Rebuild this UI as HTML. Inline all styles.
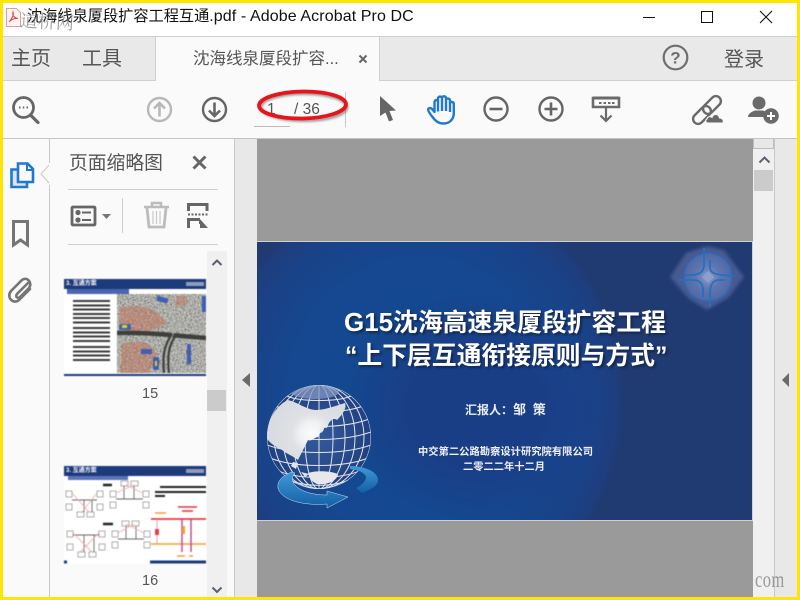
<!DOCTYPE html>
<html><head><meta charset="utf-8">
<style>
html,body{margin:0;padding:0;width:800px;height:600px;overflow:hidden;background:#fafafa}
body{position:relative;font-family:"Liberation Sans","Noto Sans CJK SC",sans-serif;color:#505050}
.a{position:absolute}
.t{position:absolute;white-space:nowrap}
svg{position:absolute;overflow:visible}
.s{font-family:"Liberation Sans","Noto Sans CJK SC",sans-serif;font-weight:700;color:#fff;white-space:nowrap;position:absolute}
</style></head><body>
<!-- title bar -->
<div class="a" style="left:0;top:0;width:800px;height:36px;background:#fff"></div>
<div class="a" style="left:0;top:36px;width:800px;height:1px;background:#cfcfcf"></div>
<!-- tab bar -->
<div class="a" style="left:0;top:37px;width:800px;height:43px;background:#e9e9e9"></div>
<div class="a" style="left:0;top:80px;width:800px;height:1px;background:#cfcfcf"></div>
<div class="a" style="left:155px;top:37px;width:225px;height:44px;background:#fafafa;border-left:1px solid #cfcfcf;border-right:1px solid #cfcfcf;box-sizing:border-box"></div>
<!-- toolbar line -->
<div class="a" style="left:0;top:138px;width:800px;height:1px;background:#c4c4c4"></div>

<svg style="left:6px;top:8px" width="15" height="19" viewBox="0 0 15 19"><path d="M.5 .5H10.500L14.500 4.500V18.500H.5Z" fill="#fff5f5" stroke="#e89a9a"/><path d="M3 14C6 11 8 7 7 4C6 7 8 10 12 10.500C8 10 5 12 3 14Z" fill="none" stroke="#e04040"/></svg>
<div class="t" style="left:27px;top:6px;font-size:15.200px;line-height:22px;color:#111">沈海线泉厦段扩容工程互通<span style="font-size:16px;letter-spacing:.1px">.pdf - Adobe Acrobat Pro DC</span></div>
<div class="t" style="left:20px;top:11px;font-size:18px;line-height:20px;color:#777;opacity:.7;font-family:'Noto Serif CJK SC',serif;transform:rotate(3deg)">道桥网</div>

<!-- window controls -->
<div class="a" style="left:643px;top:17px;width:12px;height:1px;background:#111"></div>
<div class="a" style="left:701px;top:11px;width:12px;height:12px;border:1px solid #111;box-sizing:border-box"></div>
<svg style="left:759px;top:10px" width="14" height="14"><path d="M1 1L13 13M13 1L1 13" stroke="#111" stroke-width="1.100"/></svg>

<!-- tabs -->
<div class="t" style="left:11px;top:45px;font-size:20px;line-height:28px;color:#555">主页</div>
<div class="t" style="left:82px;top:45px;font-size:20px;line-height:28px;color:#555">工具</div>
<div class="t" style="left:193px;top:47px;font-size:16.500px;line-height:24px;color:#555">沈海线泉厦段扩容...</div>
<svg style="left:358px;top:54px" width="10" height="10"><path d="M1.500 1.500L8.500 8.500M8.500 1.500L1.500 8.500" stroke="#666" stroke-width="2"/></svg>
<svg style="left:661px;top:44px" width="28" height="28"><circle cx="14.500" cy="13.500" r="11.800" fill="none" stroke="#6e6e6e" stroke-width="2.200"/><text x="14.500" y="19.500" text-anchor="middle" font-size="17" font-weight="700" font-family="Liberation Sans" fill="#6e6e6e">?</text></svg>
<div class="t" style="left:724px;top:46px;font-size:20px;line-height:28px;color:#555">登录</div>

<!-- toolbar icons -->
<svg style="left:10px;top:95px" width="32" height="32"><circle cx="13.500" cy="12.500" r="10" fill="none" stroke="#666" stroke-width="2.800"/><path d="M20.500 20L28 27.500" stroke="#666" stroke-width="3.200" stroke-linecap="round"/><path d="M9 12.500h1.500M12.800 12.500h1.500M16.500 12.500h1.500" stroke="#666" stroke-width="2"/></svg>
<svg style="left:145px;top:95px" width="28" height="28"><circle cx="14.500" cy="14.500" r="11.500" fill="none" stroke="#b8b8b8" stroke-width="2.400"/><path d="M14.500 21.500V8M9 13.500L14.500 8L20 13.500" fill="none" stroke="#b8b8b8" stroke-width="2.600"/></svg>
<svg style="left:200px;top:95px" width="28" height="28"><circle cx="14.500" cy="14.500" r="11.500" fill="none" stroke="#666" stroke-width="2.400"/><path d="M14.500 7.500V21M9 15.500L14.500 21L20 15.500" fill="none" stroke="#666" stroke-width="2.600"/></svg>

<!-- page box -->
<div class="a" style="left:254px;top:126px;width:36px;height:1px;background:#bdbdbd"></div>
<div class="a" style="left:345px;top:92px;width:1px;height:35px;background:#c8c8c8"></div>
<div class="t" style="left:267px;top:100px;font-size:15.500px;line-height:20px;color:#555">1</div>
<div class="t" style="left:294px;top:100px;font-size:15.500px;line-height:20px;color:#555">/ 36</div>
<svg style="left:255px;top:88px" width="96" height="40"><defs><filter id="es" x="-20%" y="-40%" width="140%" height="180%"><feGaussianBlur stdDeviation="1"/></filter></defs><ellipse cx="49" cy="19" rx="43" ry="13.500" fill="none" stroke="#555" stroke-width="3" opacity=".6" filter="url(#es)"/><ellipse cx="47.500" cy="17" rx="43.500" ry="13.500" fill="none" stroke="#e8141c" stroke-width="3.800" transform="rotate(-1 47 17)"/></svg>

<svg style="left:378px;top:95px" width="22" height="28"><path d="M2 1L18 15.500L11.500 16L15 25L11 26.500L7.500 17.500L2 21Z" fill="#666"/></svg>
<svg style="left:427px;top:95px" width="30" height="30" viewBox="0 0 30 30"><path d="M5.500 22C3.500 19.500 1.500 17 1.200 15C1 13 3.500 12.500 5 14L7.500 17V7C7.500 4.500 11 4.500 11 7V3.500C11 1 15 1 15 3.500V3C15 .8 19 .8 19 3V5C19 3 23 3 23 5.500V8C23 6.500 26.800 6.500 26.800 9V18C26.800 24.500 22.500 28.500 16.500 28.500C11.500 28.500 8.500 26 5.500 22ZM11 6V16.500M15 3.500V16M19 3V16M23 7V17" fill="none" stroke="#1f78d1" stroke-width="2.400" stroke-linejoin="round"/></svg>
<svg style="left:482px;top:95px" width="28" height="28"><circle cx="14" cy="14" r="11.500" fill="none" stroke="#666" stroke-width="2.400"/><path d="M7.500 14H20.500" stroke="#666" stroke-width="2.600"/></svg>
<svg style="left:537px;top:95px" width="28" height="28"><circle cx="14" cy="14" r="11.500" fill="none" stroke="#666" stroke-width="2.400"/><path d="M7.500 14H20.500M14 7.500V20.500" stroke="#666" stroke-width="2.600"/></svg>
<svg style="left:591px;top:96px" width="30" height="28"><path d="M2 2H28V11H2Z" fill="none" stroke="#6a6a6a" stroke-width="2.600"/><path d="M2 2H28" stroke="#6a6a6a" stroke-width="3"/><path d="M8 7h2.500M12.500 7h2.500M17 7h2.500M21 7h2.500" stroke="#6a6a6a" stroke-width="2"/><path d="M15 11V25M9.500 19.500L15 25L20.500 19.500" fill="none" stroke="#6a6a6a" stroke-width="2.200"/></svg>
<svg style="left:692px;top:94px" width="34" height="32">
 <rect x="-10.500" y="-5" width="21" height="10" rx="5" transform="translate(10,21) rotate(-45)" fill="none" stroke="#6a6a6a" stroke-width="2.400"/>
 <rect x="-10.500" y="-5" width="21" height="10" rx="5" transform="translate(20,11) rotate(-45)" fill="none" stroke="#6a6a6a" stroke-width="2.400"/>
 <path d="M16 29C13.500 29 13 26 15 25C15.500 22.500 18.500 22 20 23.500C21.500 19.500 26.500 19.500 27.500 24C30 24 32 26 31 29Z" fill="#6a6a6a" stroke="#fafafa" stroke-width="1"/>
</svg>
<svg style="left:747px;top:94px" width="34" height="32"><circle cx="12" cy="9" r="6.500" fill="#6a6a6a"/><path d="M1 23C1 19.500 5 17.500 8 16.500H16C19 17.500 22 19 22 20L19 23Z" fill="#6a6a6a"/><circle cx="24" cy="22" r="7.800" fill="#6a6a6a"/><path d="M20 22H28M24 18V26" stroke="#fff" stroke-width="2"/></svg>

<!-- left rail -->
<div class="a" style="left:49px;top:139px;width:1px;height:461px;background:#c8c8c8"></div>
<svg style="left:40px;top:162px" width="14" height="26"><path d="M10 2L1 12L10 22" fill="#fafafa" stroke="#c8c8c8"/><path d="M10 1V23" stroke="#fafafa" stroke-width="2"/></svg>
<svg style="left:9px;top:160px" width="28" height="32"><path d="M2.500 9.500H18V27H2.500Z" fill="#dfe4ea" stroke="#1f78d1" stroke-width="2.600"/><path d="M9 3.500H18.500L24 9V22H9Z" fill="#fafafa" stroke="#1f78d1" stroke-width="2.600"/><path d="M18 4V10H24" fill="none" stroke="#1f78d1" stroke-width="2"/></svg>
<svg style="left:11px;top:219px" width="20" height="30"><path d="M2.500 2.500H16.500V26L9.500 21L2.500 26Z" fill="none" stroke="#757575" stroke-width="3"/></svg>
<svg style="left:7px;top:276px" width="28" height="28"><path d="M21 7L10 18C8 21 11 23 13 21L22 12C26 7 20 0 15 4L4 15C-1 21 6 29 12 24L23 13" fill="none" stroke="#757575" stroke-width="2.600" stroke-linecap="round"/></svg>

<!-- thumbnail panel -->
<div class="t" style="left:69px;top:149px;font-size:18.800px;line-height:28px;color:#555">页面缩略图</div>
<svg style="left:192px;top:155px" width="16" height="16"><path d="M1.500 1.500L13.500 13.500M13.500 1.500L1.500 13.500" stroke="#666" stroke-width="3"/></svg>
<div class="a" style="left:68px;top:189px;width:150px;height:1px;background:#cfcfcf"></div>
<div class="a" style="left:68px;top:244px;width:150px;height:1px;background:#cfcfcf"></div>
<div class="a" style="left:122px;top:198px;width:1px;height:35px;background:#cfcfcf"></div>
<svg style="left:70px;top:205px" width="44" height="24"><rect x="2" y="2" width="23" height="18" rx="1" fill="none" stroke="#666" stroke-width="2.800"/><circle cx="8" cy="7.500" r="2.600" fill="#666"/><circle cx="8" cy="15" r="2.600" fill="#666"/><path d="M12 7.500H21M12 15H21" stroke="#666" stroke-width="2"/><path d="M32 9H41L36.500 14Z" fill="#777"/></svg>
<svg style="left:143px;top:201px" width="28" height="30"><path d="M1 6H26M9 5V2H18V5" fill="none" stroke="#bcbcbc" stroke-width="2.600"/><path d="M4 7L6 26H21L23 7" fill="none" stroke="#bcbcbc" stroke-width="2.800"/><path d="M10 10V23M13.500 10V23M17 10V23" stroke="#c8c8c8" stroke-width="1.200"/></svg>
<svg style="left:187px;top:202px" width="24" height="28"><path d="M1.500 9V2.500H20V9" fill="none" stroke="#666" stroke-width="3"/><path d="M1 12.500H21" stroke="#666" stroke-width="2" stroke-dasharray="2 1.500"/><path d="M1.500 26V17.500H13" fill="none" stroke="#666" stroke-width="3"/><path d="M12 16L21 26H13V22H12Z" fill="#666"/></svg>

<!-- thumb scrollbar -->
<div class="a" style="left:207px;top:251px;width:20px;height:349px;background:#f0f0f0"></div>
<svg style="left:211px;top:258px" width="12" height="10"><path d="M1.500 7L6 2.500L10.500 7" fill="none" stroke="#5a6070" stroke-width="2"/></svg>
<div class="a" style="left:207px;top:390px;width:19px;height:21px;background:#cbcbcb"></div>
<svg style="left:211px;top:585px" width="12" height="10"><path d="M1.500 2.500L6 7L10.500 2.500" fill="none" stroke="#5a6070" stroke-width="2"/></svg>

<!-- thumb 15 -->
<div class="a" style="left:64px;top:279px;width:142px;height:97px;background:#fff;overflow:hidden;filter:blur(.45px)">
 <div class="a" style="left:0;top:0;width:142px;height:10px;background:#1d3a7a"></div>
 <div class="t" style="left:2px;top:0;font-size:6px;line-height:10px;color:#fff;font-weight:700">3. 互通方案</div>
 <div class="a" style="left:122px;top:3px;width:18px;height:4px;background:#8f9cbd"></div>
 <div class="a" style="left:3px;top:10px;width:62px;height:5px;background:#4a66b0"></div>
 <div class="a" style="left:53px;top:15px;width:89px;height:79px;overflow:hidden;background:#777">
  <svg style="left:0;top:0" width="89" height="79">
   <defs><filter id="ns" x="0" y="0" width="100%" height="100%"><feTurbulence type="fractalNoise" baseFrequency=".85" numOctaves="2" seed="4"/><feColorMatrix values="1.400 0 0 0 -.27 1.400 0 0 0 -.27 1.400 0 0 0 -.29 0 0 0 0 1"/></filter>
   <filter id="nb" x="0" y="0" width="100%" height="100%"><feTurbulence type="fractalNoise" baseFrequency=".7" numOctaves="2" seed="9"/><feColorMatrix values="0 0 0 0 .5 0 0 0 0 .2 0 0 0 0 .13 1.500 2 0 0 -1.100"/></filter>
   <clipPath id="mp"><path d="M3 14C20 8 42 14 50 30L30 38L2 36ZM5 50C20 45 35 48 40 60L32 79H3ZM60 2H70V12H58Z"/></clipPath></defs>
   <rect width="89" height="79" filter="url(#ns)"/>
   <g clip-path="url(#mp)"><rect width="89" height="79" filter="url(#nb)"/></g>
   <path d="M0 39C30 38 60 42 89 44" fill="none" stroke="#3c3f3b" stroke-width="4.500"/>
   <path d="M45 79C47 60 52 45 75 0" fill="none" stroke="#a8aba4" stroke-width="1.500"/>
   <path d="M47 79C45 60 48 50 55 40M52 79C50 60 52 50 60 40" fill="none" stroke="#3c3f3b" stroke-width="2.200"/>
   <rect x="40" y="3" width="11" height="5" fill="#3f5fb0" transform="rotate(15 45 5)"/>
   <rect x="2" y="30" width="12" height="6" rx="2" fill="#3f5fb0"/><rect x="5" y="31" width="5" height="3" fill="#e8d020"/>
   <rect x="24" y="55" width="11" height="5" fill="#3f5fb0"/>
   <rect x="36" y="63" width="6" height="13" rx="2" fill="#3f5fb0"/><rect x="38" y="67" width="2" height="5" fill="#e8d020"/>
   <rect x="70" y="50" width="4" height="20" fill="#3f5fb0"/><rect x="85" y="2" width="4" height="16" fill="#3f5fb0"/>
  </svg>
 </div>
 <div class="a" style="left:9px;top:21px;width:37px;height:25px;background:repeating-linear-gradient(#3a3a3a 0 2px,#fff 2px 4.300px)"></div>
 <div class="a" style="left:9px;top:48px;width:37px;height:16px;background:repeating-linear-gradient(#3a3a3a 0 2px,#fff 2px 4.300px)"></div>
 <div class="a" style="left:9px;top:67px;width:37px;height:17px;background:repeating-linear-gradient(#3a3a3a 0 2px,#fff 2px 4.300px)"></div>
 <div class="a" style="left:0;top:95px;width:142px;height:2px;background:#1d3a7a"></div>
</div>
<div class="t" style="left:142px;top:385px;font-size:14.500px;line-height:18px;color:#555">15</div>

<!-- thumb 16 -->
<div class="a" style="left:64px;top:466px;width:142px;height:98px;background:#fff;overflow:hidden;filter:blur(.45px)">
 <div class="a" style="left:0;top:0;width:142px;height:10px;background:#1d3a7a"></div>
 <div class="t" style="left:2px;top:0;font-size:6px;line-height:10px;color:#fff;font-weight:700">3. 互通方案</div>
 <div class="a" style="left:122px;top:3px;width:18px;height:4px;background:#8f9cbd"></div>
 <div class="a" style="left:4px;top:10px;width:60px;height:4px;background:#5a74b8"></div>
 <svg style="left:0;top:0" width="142" height="98">
  <g fill="#fff" stroke="#999" stroke-width=".8">
   <rect x="2" y="25" width="6" height="6"/><rect x="2" y="38" width="6" height="6"/><rect x="33" y="25" width="6" height="6"/><rect x="33" y="38" width="6" height="6"/><rect x="13" y="46" width="7" height="5"/><rect x="23" y="46" width="7" height="5"/>
   <rect x="46" y="25" width="6" height="6"/><rect x="46" y="36" width="6" height="6"/><rect x="79" y="25" width="6" height="6"/><rect x="79" y="36" width="6" height="6"/><rect x="57" y="15" width="7" height="5"/><rect x="67" y="15" width="7" height="5"/>
   <rect x="3" y="65" width="6" height="6"/><rect x="3" y="78" width="6" height="6"/><rect x="35" y="65" width="6" height="6"/><rect x="35" y="78" width="6" height="6"/><rect x="14" y="86" width="7" height="5"/><rect x="25" y="86" width="7" height="5"/>
   <rect x="48" y="65" width="6" height="6"/><rect x="48" y="76" width="6" height="6"/><rect x="80" y="65" width="6" height="6"/><rect x="80" y="76" width="6" height="6"/><rect x="58" y="55" width="7" height="5"/><rect x="68" y="55" width="7" height="5"/>
  </g>
  <path d="M8 34H33M9 69H35M52 33H79M54 73H80M20 34V46M28 34V46M60 20V33M70 20V33M20 69V86M30 69V86M62 60V73M72 60V73" stroke="#666" stroke-width=".9" fill="none"/>
  <path d="M8 27L25 46M33 27L18 46M52 27L70 19M79 27L62 19M9 67L28 86M35 67L16 86M54 67L70 58M80 67L62 58" stroke="#f0b0b0" stroke-width=".9" fill="none"/>
  <path d="M87 53H142" stroke="#e0202a" stroke-width="1.500"/><path d="M87 78H142" stroke="#f0a030" stroke-width="1.500"/>
  <path d="M118 53V86M127 53V86" stroke="#c04a90" stroke-width="1.500"/><path d="M93 53V78" stroke="#e8a0a0" stroke-width="1"/><rect x="91" y="63" width="4" height="6" fill="#e04050"/><rect x="118" y="60" width="3" height="8" fill="#f0a030"/>
  <path d="M96 21H142M91 26H142M91 30H101" stroke="#222" stroke-width="2"/>
  <path d="M114 41H133M118 45H129" stroke="#e03040" stroke-width="1.500"/><path d="M91 47H102" stroke="#f0a030" stroke-width="1.500"/>
  <path d="M113 90H121M125 90H129" stroke="#e8a030" stroke-width="1.500"/>
  <path d="M39 19H48M39 58H49" stroke="#222" stroke-width="2.400"/>
  <path d="M0 96H3M86 96H142" stroke="#1d3a7a" stroke-width="3"/>
 </svg>
</div>
<div class="t" style="left:142px;top:572px;font-size:14.500px;line-height:18px;color:#555">16</div>

<!-- splitter -->
<div class="a" style="left:234px;top:139px;width:1px;height:461px;background:#c8c8c8"></div>
<div class="a" style="left:235px;top:139px;width:22px;height:461px;background:#e8e8e8"></div>
<svg style="left:241px;top:373px" width="10" height="16"><path d="M9 0V14L1 7Z" fill="#6a6a6a"/></svg>

<!-- document -->
<div class="a" style="left:257px;top:139px;width:496px;height:461px;background:#9a9a9a"></div>
<div class="a" style="left:257px;top:241px;width:496px;height:280px;background:#d0d0d0"></div>
<div class="a" style="left:257px;top:242px;width:495px;height:278px;overflow:hidden;background:#203a72">
 <div class="a" style="left:-42px;top:-62px;width:410px;height:440px;border-radius:50%;background:radial-gradient(closest-side,#12488f 0%,#154890 62%,#1a4288 85%,#1e3d7c 97%,transparent 100%)"></div>
 <div class="a" style="left:85px;top:50px;width:270px;height:230px;border-radius:50%;background:radial-gradient(closest-side,#1a3e86 50%,rgba(22,60,125,0) 100%)"></div>
</div>
<div class="s" style="left:344px;top:304px;font-size:24.800px;line-height:37px;text-shadow:2px 2px 2px #142850"><span style="font-size:26px">G15</span>沈海高速泉厦段扩容工程</div>
<div class="s" style="left:345px;top:338px;font-size:24.800px;line-height:37px;text-shadow:2px 2px 2px #142850">“上下层互通衔接原则与方式”</div>
<div class="s" style="left:465px;top:401px;font-size:12px;line-height:18px;color:#e8ecf4">汇报人：<span style="font-size:13px">邹</span>&nbsp;&nbsp;<span style="font-size:13px">策</span></div>
<div class="s" style="left:418px;top:445px;font-size:10.300px;line-height:16px;color:#eef0f6">中交第二公路勘察设计研究院有限公司</div>
<div class="s" style="left:463px;top:460px;font-size:10.250px;line-height:16px;color:#eef0f6">二零二二年十二月</div>

<!-- logo -->
<svg style="left:669px;top:245px" width="76" height="66" viewBox="0 0 76 66">
 <defs><radialGradient id="lg"><stop offset="0" stop-color="#8a9ac8"/><stop offset=".5" stop-color="#5f76b0"/><stop offset="1" stop-color="#5068a4"/></radialGradient>
 <filter id="lb" x="-20%" y="-20%" width="140%" height="140%"><feGaussianBlur stdDeviation="1.500"/></filter></defs>
 <path d="M38 1L55 5L75 32L59 53L38 65L19 53L1 32L17 8Z" fill="#465a92" filter="url(#lb)"/>
 <circle cx="39" cy="32" r="24" fill="url(#lg)"/>
 <circle cx="39" cy="32" r="24" fill="none" stroke="#2a6ab8" stroke-width="1.300"/>
 <path d="M35 3V20C35 27 30 30 22 30H16M41 15V22C41 28 46 29 53 30L66 31M9 35H24C30 35 34 38 34 45V52M56 35H50C44 35 41 40 41 48V62" fill="none" stroke="#2470c0" stroke-width="1.800"/>
 <path d="M39 26L45 32L39 38L33 32Z" fill="#8f9fcc"/>
</svg>

<!-- globe -->
<svg style="left:265px;top:384px" width="116" height="130" viewBox="0 0 116 130">
 <defs><radialGradient id="gb" cx=".5" cy=".5" r=".5"><stop offset="0" stop-color="#345a9c"/><stop offset="1" stop-color="#21407f"/></radialGradient>
 <linearGradient id="ar" x1="0" y1="0" x2="0" y2="1"><stop offset="0" stop-color="#3f9ad8"/><stop offset="1" stop-color="#135ea4"/></linearGradient>
 <radialGradient id="ld" gradientUnits="userSpaceOnUse" cx="47" cy="50" r="40"><stop offset="0" stop-color="#fafbfc"/><stop offset=".3" stop-color="#f0f1f3"/><stop offset=".5" stop-color="#dfe1e5"/><stop offset="1" stop-color="#d8dbe0"/></radialGradient>
 <clipPath id="gc"><circle cx="54" cy="53" r="52"/></clipPath></defs>
 <circle cx="54" cy="53" r="52" fill="url(#gb)"/>
 <g clip-path="url(#gc)">
  <g fill="none" stroke="#dfe5f0" stroke-width="1">
   <ellipse cx="54" cy="53" rx="52" ry="52"/><ellipse cx="54" cy="53" rx="45" ry="52"/><ellipse cx="54" cy="53" rx="36" ry="52"/><ellipse cx="54" cy="53" rx="26" ry="52"/><ellipse cx="54" cy="53" rx="14" ry="52"/>
   <path d="M54 1V105"/>
   <path d="M10 22C30 30 78 30 98 22M4 35C30 45 78 45 104 35M2 48C30 58 78 58 106 48M2 61C30 71 78 71 106 61M5 74C30 84 78 84 103 74M12 86C30 96 78 96 96 86M24 96C40 103 68 103 84 96M22 12C35 18 73 18 86 12"/>
  </g>
  <ellipse cx="50" cy="8" rx="24" ry="7" fill="#8598c0" opacity=".75"/>
  <path d="M1 53C3 32 14 20 23 16C32 18 40 25 50 26C60 26 70 22 80 19C82 24 78 30 72 36C68 33 64 37 62 44C58 42 56 48 53 53C48 54 46 58 43 56C40 62 36 70 33 76C28 72 22 70 17 66C10 62 5 60 1 53Z" fill="url(#ld)"/>
  <path d="M43 89C52 86 66 87 73 90C72 97 63 101 52 100C47 98 44 94 43 89Z" fill="#e6e8ec"/>
  <path d="M28 78L33 79L31 85L26 82ZM36 88L44 90L40 93Z" fill="#e0e3e8"/>
  <path d="M57 38C60 42 60 46 56 49L54 46C56 44 56 41 57 38Z" fill="#e6e8ec"/>
 </g>
 <path d="M27 88C16 92 12 98 13 104C16 116 38 122 62 120L62 124L83 113L62 107L62 111C45 111 32 106 28 98C27 94 28 91 30 89Z" fill="url(#ar)" stroke="#cfe0f0" stroke-width=".5"/>
 <path d="M85 82C100 82 113 88 113 96C113 102 105 106 97 109L91 104C97 101 101 97 101 93C100 89 94 86 85 85Z" fill="url(#ar)"/>
</svg>

<!-- doc scrollbar -->
<div class="a" style="left:753px;top:139px;width:22px;height:461px;background:#f0f0f0"></div>
<div class="a" style="left:753px;top:139px;width:21px;height:10px;background:#e8e8e8;border:1px solid #bdbdbd;border-top:0;box-sizing:border-box"></div>
<svg style="left:758px;top:155px" width="14" height="10"><path d="M1.500 7.500L6.500 2.500L11.500 7.500" fill="none" stroke="#5a6070" stroke-width="2"/></svg>
<div class="a" style="left:754px;top:170px;width:19px;height:21px;background:#cbcbcb"></div>
<div class="a" style="left:774px;top:139px;width:1px;height:461px;background:#c8c8c8"></div>
<div class="a" style="left:775px;top:139px;width:22px;height:461px;background:#e8e8e8"></div>
<svg style="left:781px;top:373px" width="10" height="16"><path d="M8 0V14L1 7Z" fill="#6a6a6a"/></svg>
<div class="t" style="left:755px;top:567px;font-size:23px;line-height:26px;color:#999;font-family:'Liberation Serif',serif;transform:scaleX(.72);transform-origin:left top;letter-spacing:.5px">com</div>

<!-- yellow frame -->
<div class="a" style="left:0;top:0;width:800px;height:3px;background:#ffe600"></div>
<div class="a" style="left:0;top:597px;width:800px;height:3px;background:#ffe600"></div>
<div class="a" style="left:0;top:0;width:3px;height:600px;background:#ffe600"></div>
<div class="a" style="left:797px;top:0;width:3px;height:600px;background:#ffe600"></div>
</body></html>
